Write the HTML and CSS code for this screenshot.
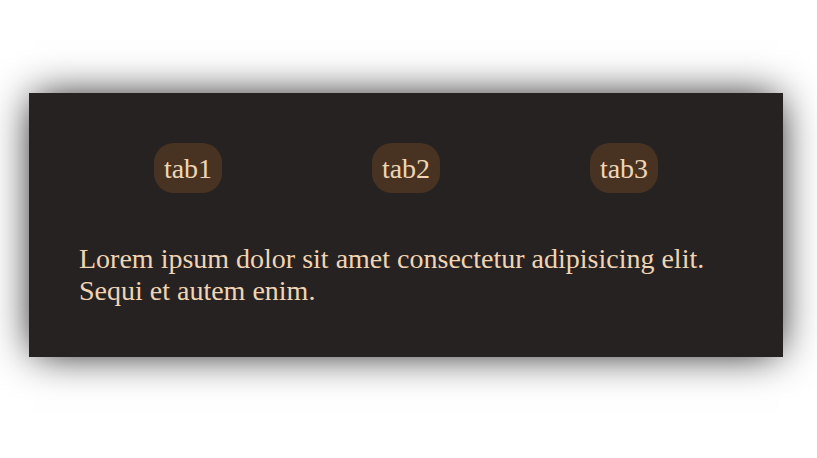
FILE: index.html
```html
<!DOCTYPE html>
<html lang="en">
<head>
<meta charset="utf-8">
<meta name="viewport" content="width=device-width, initial-scale=1">
<title>Tabs</title>
<link rel="stylesheet" href="styles.css">
</head>
<body>
<main class="card">
  <div class="tabs" role="tablist">
    <button class="tab" id="tab1" type="button" role="tab" aria-controls="panel" aria-selected="true">tab1</button>
    <button class="tab" type="button" role="tab" aria-selected="false">tab2</button>
    <button class="tab" type="button" role="tab" aria-selected="false">tab3</button>
  </div>
  <p class="content" id="panel" role="tabpanel" aria-labelledby="tab1">Lorem ipsum dolor sit amet consectetur adipisicing elit. Sequi et autem enim.</p>
</main>
</body>
</html>
```

FILE: styles.css
```css
* {
  box-sizing: border-box;
}

body {
  min-height: 100vh;
  margin: 0;
  padding: 93px 34px 0 29px;
  background: #fff;
  font-family: "Liberation Serif", "Times New Roman", serif;
  font-size: 28px;
  line-height: 32px;
}

.card {
  padding: 50px;
  background: #272222;
  color: #f0d5b5;
  box-shadow: 0 0 40px -5px #000;
}

.tabs {
  display: flex;
  justify-content: space-around;
}

.tab {
  padding: 11px 10px 9px;
  border: 0;
  border-radius: 20px;
  background: #483322;
  color: inherit;
  font: inherit;
  line-height: 30px;
  cursor: pointer;
}

.content {
  margin: 50px 0 0;
}
```
